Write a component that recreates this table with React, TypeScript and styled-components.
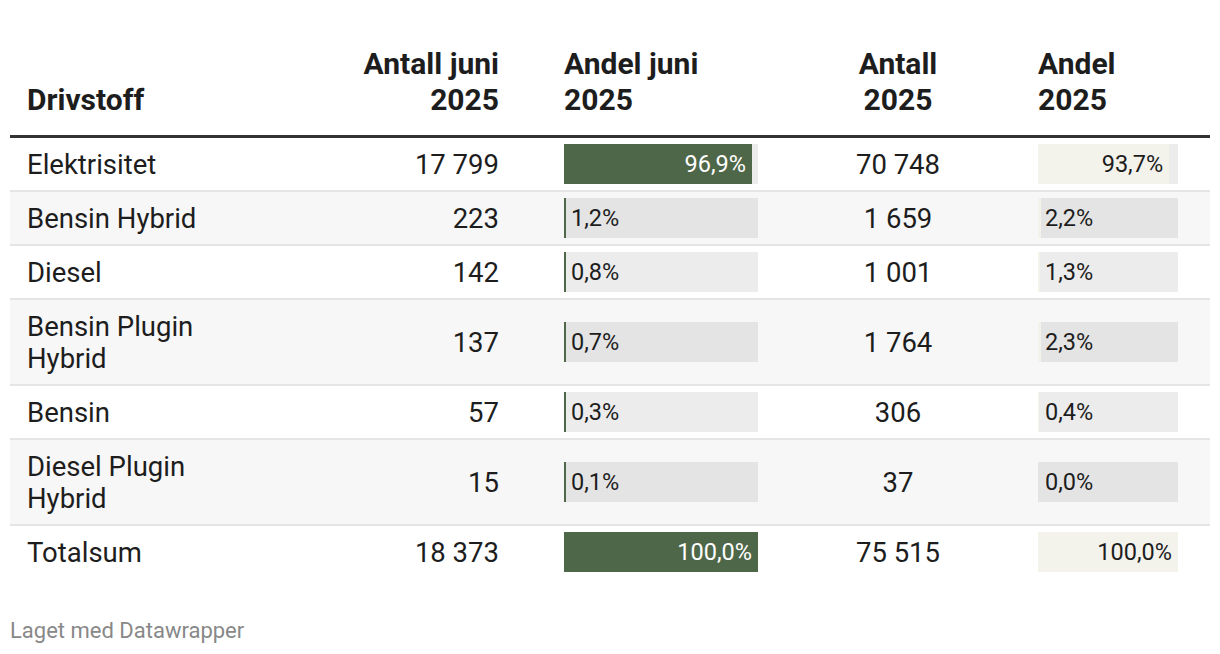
import React from 'react'
import styled, { createGlobalStyle } from 'styled-components'

const color = {
  text: '#1d1d1d',
  muted: '#888888',
  rule: '#333333',
  divider: '#e5e5e5',
  stripe: '#f7f7f7',
  green: '#4f6749',
  cream: '#f3f3ec',
  track: 'rgba(0, 0, 0, 0.075)',
}

const columns = '210px 262px 259px 280px 140px'

const GlobalStyle = createGlobalStyle`
  html, body {
    margin: 0;
    padding: 0;
    background: #ffffff;
  }

  body {
    font-family: Roboto, 'Liberation Sans', sans-serif;
    color: ${color.text};
  }
`

const Page = styled.div`
  width: 1200px;
  padding: 11px 10px 0;
`

const HeadRow = styled.div`
  display: grid;
  grid-template-columns: ${columns};
  align-items: end;
  padding: 35px 0 17px 17px;
  border-bottom: 3px solid ${color.rule};
`

const HeadCell = styled.div<{ $align: 'left' | 'right' | 'center'; $indent?: boolean }>`
  font-size: 30px;
  font-weight: 700;
  line-height: 36px;
  text-align: ${(p) => p.$align};
  padding-left: ${(p) => (p.$indent ? '65px' : '0')};
`

const Row = styled.div<{ $striped: boolean; $last: boolean }>`
  display: grid;
  grid-template-columns: ${columns};
  align-items: center;
  padding-left: 17px;
  background: ${(p) => (p.$striped ? color.stripe : '#ffffff')};
  border-bottom: ${(p) => (p.$last ? '2px solid transparent' : `2px solid ${color.divider}`)};
`

const Name = styled.div`
  font-size: 27.5px;
  line-height: 32px;
  padding: 11px 0 9px;
`

const Count = styled.div<{ $align: 'right' | 'center' }>`
  font-size: 27.5px;
  line-height: 32px;
  padding-top: 2px;
  text-align: ${(p) => p.$align};
`

const BarCell = styled.div<{ $indent?: boolean }>`
  padding-left: ${(p) => (p.$indent ? '65px' : '0')};
`

// fill and outside label share the single grid cell of the track
const Track = styled.div`
  display: grid;
  grid-template-columns: 100%;
  height: 40px;
  background: ${color.track};

  & > * {
    grid-area: 1 / 1;
  }
`

const Fill = styled.div<{ $tone: 'green' | 'cream'; $min: boolean }>`
  display: flex;
  align-items: center;
  justify-content: flex-end;
  justify-self: start;
  min-width: ${(p) => (p.$min ? '2px' : '0')};
  background: ${(p) => (p.$tone === 'green' ? color.green : color.cream)};
`

const Label = styled.span<{ $inverted?: boolean; $inside: boolean }>`
  font-size: 23.5px;
  line-height: 40px;
  white-space: nowrap;
  color: ${(p) => (p.$inverted ? '#ffffff' : color.text)};
  padding: ${(p) => (p.$inside ? '0 6px 0 0' : '0 0 0 7px')};
`

const Footer = styled.div`
  margin-top: 39px;
  font-size: 22px;
  line-height: 24px;
  color: ${color.muted};
`

type Entry = {
  name: string
  june: string
  juneShare: number
  year: string
  yearShare: number
}

const rows: Entry[] = [
  { name: 'Elektrisitet', june: '17 799', juneShare: 96.9, year: '70 748', yearShare: 93.7 },
  { name: 'Bensin Hybrid', june: '223', juneShare: 1.2, year: '1 659', yearShare: 2.2 },
  { name: 'Diesel', june: '142', juneShare: 0.8, year: '1 001', yearShare: 1.3 },
  { name: 'Bensin Plugin Hybrid', june: '137', juneShare: 0.7, year: '1 764', yearShare: 2.3 },
  { name: 'Bensin', june: '57', juneShare: 0.3, year: '306', yearShare: 0.4 },
  { name: 'Diesel Plugin Hybrid', june: '15', juneShare: 0.1, year: '37', yearShare: 0.0 },
  { name: 'Totalsum', june: '18 373', juneShare: 100, year: '75 515', yearShare: 100 },
]

const formatShare = (value: number) => `${value.toFixed(1).replace('.', ',')}%`

const ShareBar = ({ value, tone }: { value: number; tone: 'green' | 'cream' }) => {
  const inside = value > 50
  const label = (
    <Label $inside={inside} $inverted={inside && tone === 'green'}>
      {formatShare(value)}
    </Label>
  )

  return (
    <Track>
      <Fill $tone={tone} $min={tone === 'green'} style={{ width: `${value}%` }}>
        {inside && label}
      </Fill>
      {!inside && label}
    </Track>
  )
}

export default function App() {
  return (
    <Page>
      <GlobalStyle />
      <HeadRow>
        <HeadCell $align="left">Drivstoff</HeadCell>
        <HeadCell $align="right">
          Antall juni
          <br />
          2025
        </HeadCell>
        <HeadCell $align="left" $indent>
          Andel juni
          <br />
          2025
        </HeadCell>
        <HeadCell $align="center">
          Antall
          <br />
          2025
        </HeadCell>
        <HeadCell $align="left">
          Andel
          <br />
          2025
        </HeadCell>
      </HeadRow>
      {rows.map((row, i) => (
        <Row key={row.name} $striped={i % 2 === 1} $last={i === rows.length - 1}>
          <Name>{row.name}</Name>
          <Count $align="right">{row.june}</Count>
          <BarCell $indent>
            <ShareBar value={row.juneShare} tone="green" />
          </BarCell>
          <Count $align="center">{row.year}</Count>
          <BarCell>
            <ShareBar value={row.yearShare} tone="cream" />
          </BarCell>
        </Row>
      ))}
      <Footer>Laget med Datawrapper</Footer>
    </Page>
  )
}
